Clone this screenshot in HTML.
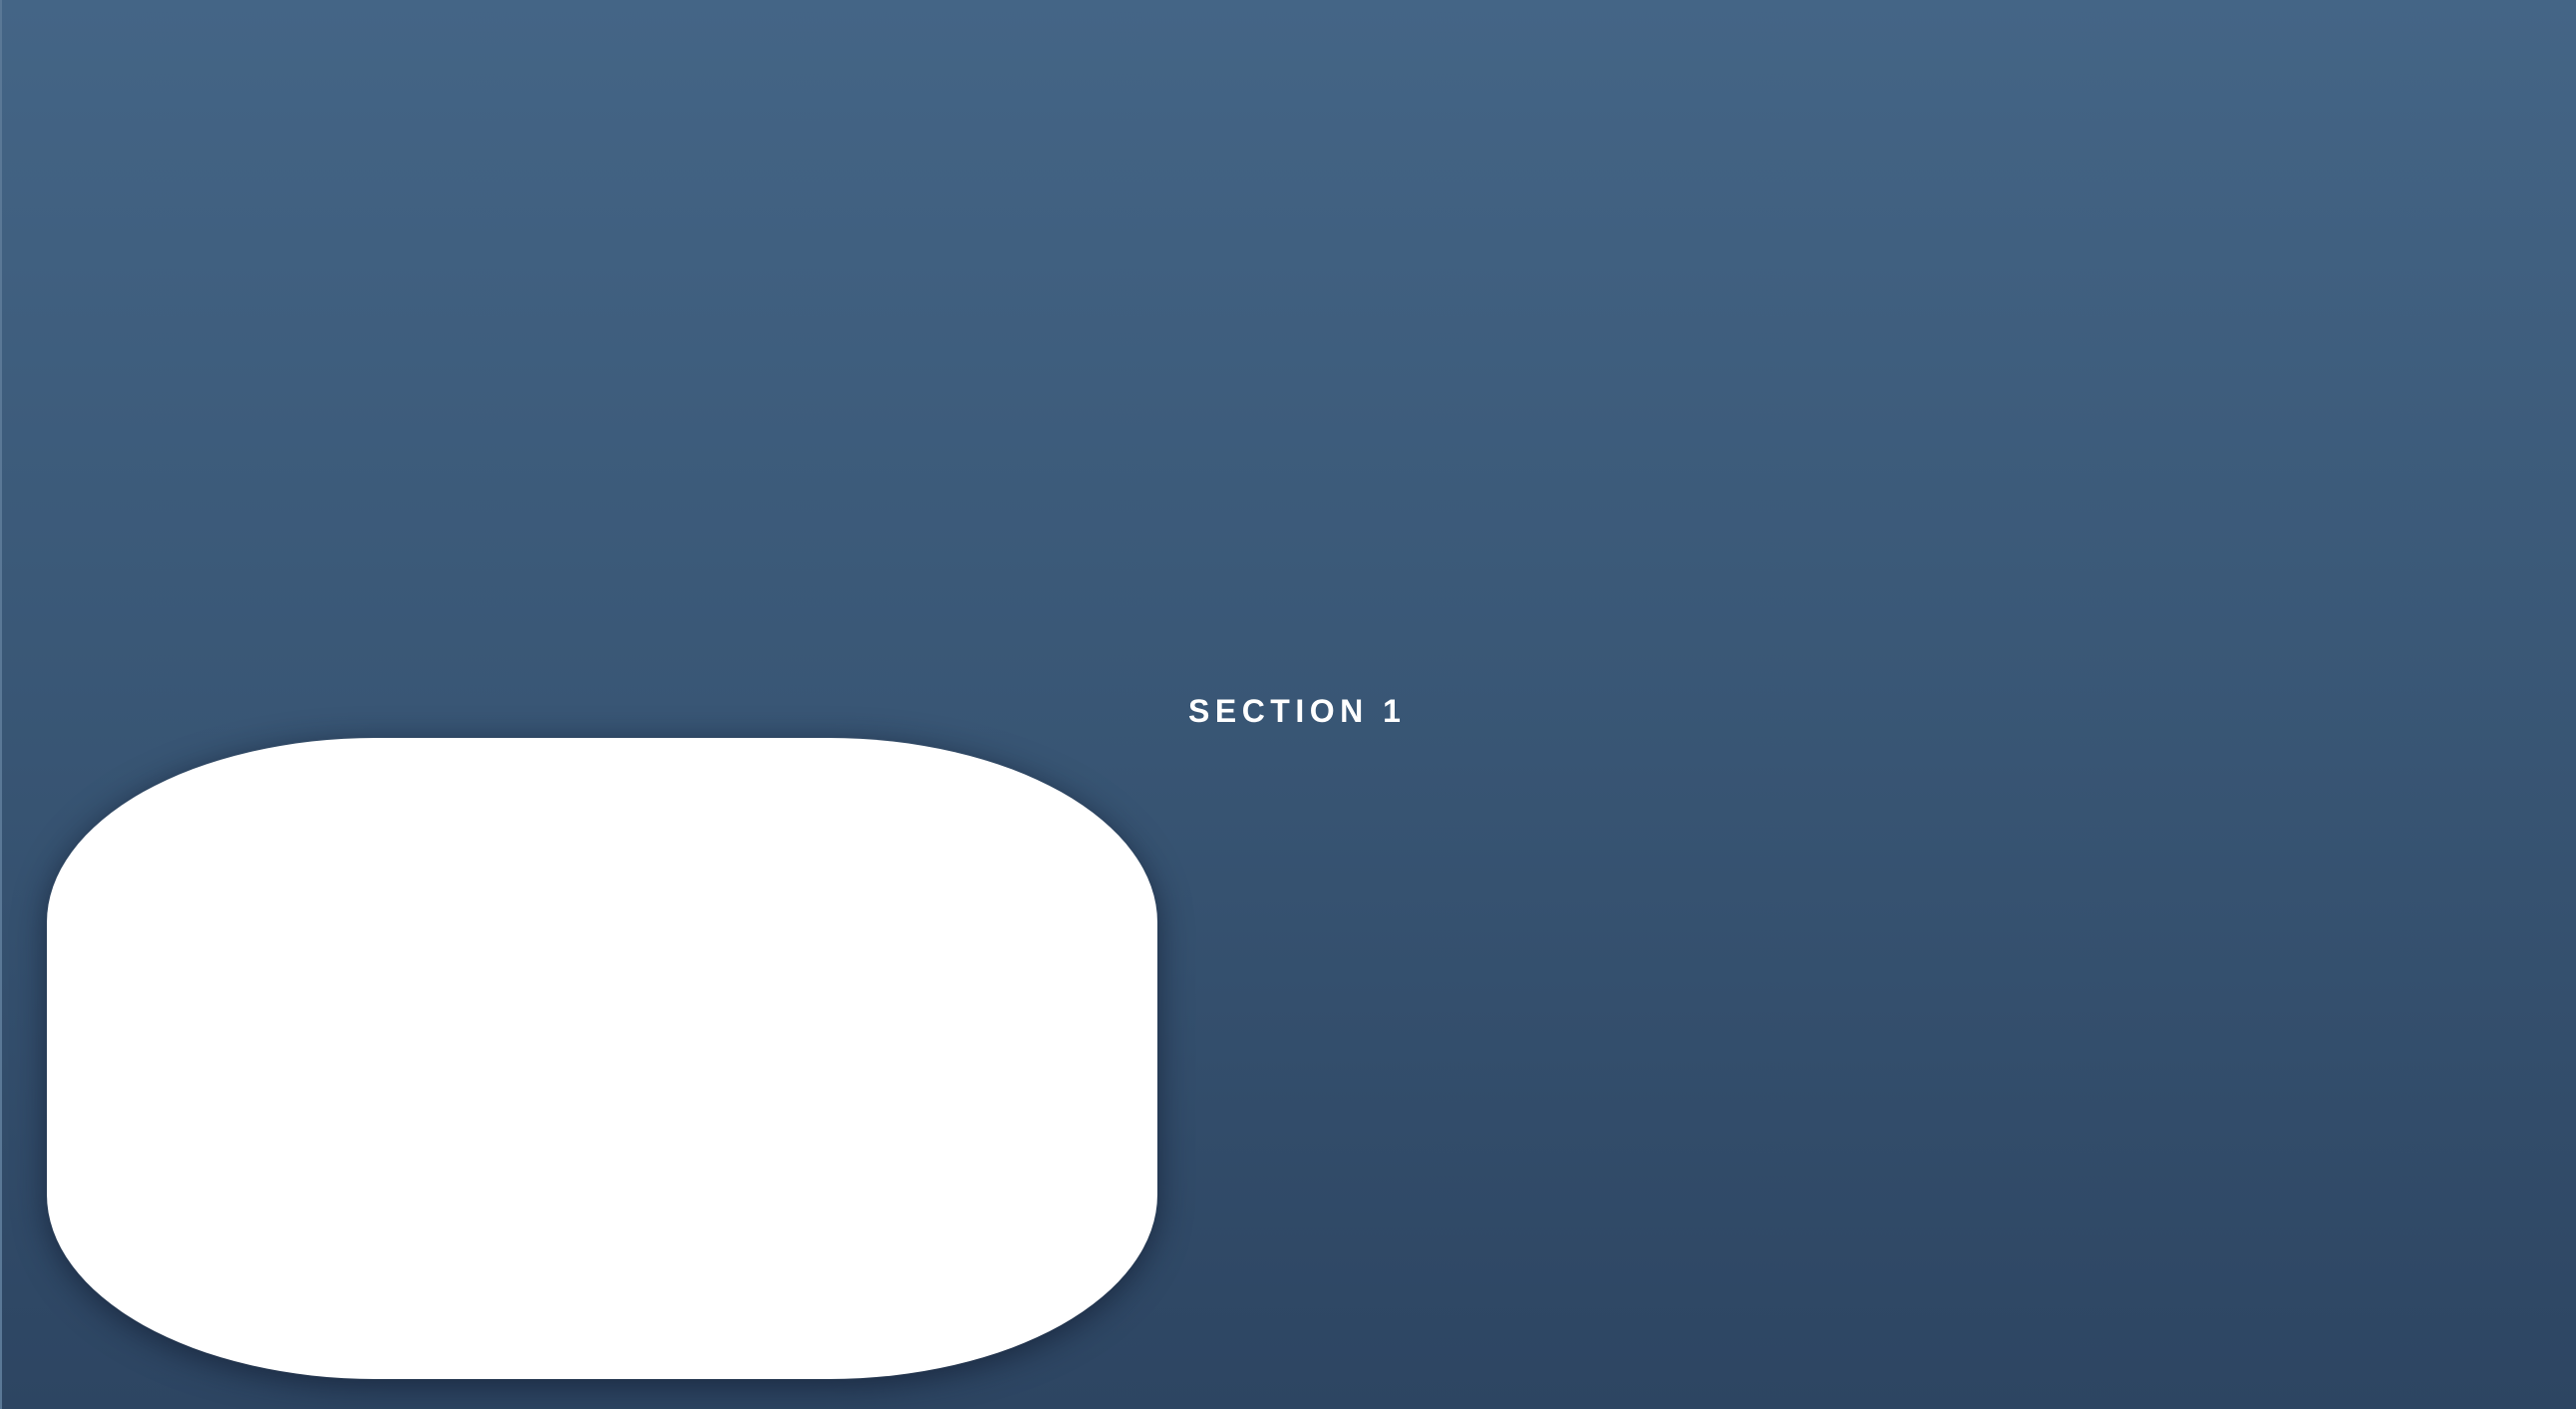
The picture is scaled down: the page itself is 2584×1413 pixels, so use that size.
<!DOCTYPE html>
<html><head><meta charset="utf-8"><style>
html,body{margin:0;padding:0;width:2584px;height:1413px;overflow:hidden}
body{background:linear-gradient(180deg,#446586 0%,#3a5877 45%,#2d4562 100%);position:relative;font-family:"Liberation Sans",sans-serif}
.edge{position:absolute;left:0;top:0;width:2px;height:1413px;background:#5a7896}
.t{position:absolute;left:1192px;top:696px;font-size:32px;font-weight:bold;color:#fff;letter-spacing:5.5px;line-height:34px;white-space:nowrap}
.card{position:absolute;left:47px;top:740px;width:1114px;height:643px;background:#fff;border-radius:330px/185px;box-shadow:0 6px 32px rgba(15,25,45,.65)}
</style></head><body>
<div class="edge"></div>
<div class="t">SECTION 1</div>
<div class="card"></div>
</body></html>
